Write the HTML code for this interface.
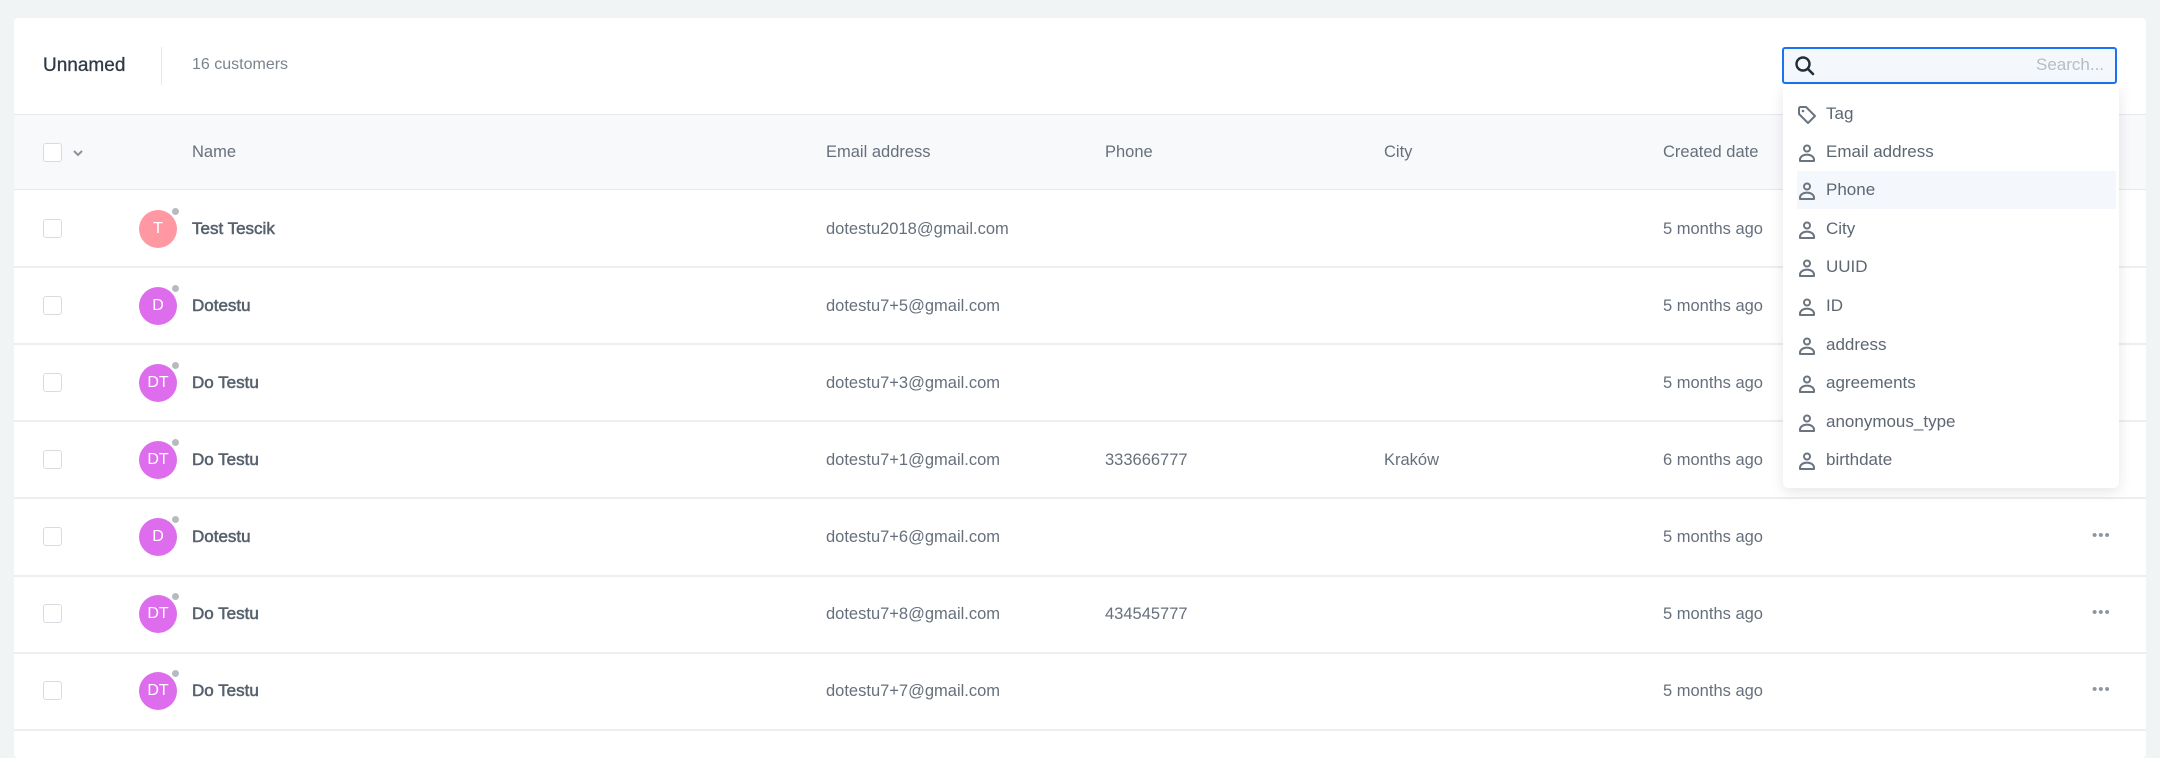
<!DOCTYPE html>
<html><head><meta charset="utf-8"><style>
*{margin:0;padding:0;box-sizing:border-box}
body{width:2160px;height:740px;background:#f1f4f5;font-family:"Liberation Sans",sans-serif;position:relative;overflow:hidden;color:#5b6673}
.card{position:absolute;left:14px;top:18px;width:2132px;height:740px;background:#fff;border-radius:4px}
.a{position:absolute;white-space:nowrap}
.hdr{position:absolute;left:14px;top:114px;width:2132px;height:76px;background:#f8f9fb;border-top:1px solid #e6e9ec;border-bottom:1px solid #e6e9ec}
.sep{position:absolute;left:14px;width:2132px;height:2px;background:#eceef0}
.cb{position:absolute;left:43px;width:19px;height:19px;border:1px solid #d8dce0;border-radius:3px;background:#fff}
.av{position:absolute;left:139px;width:38px;height:38px;border-radius:50%;color:#fff;font-size:16px;text-align:center;line-height:38px}
.av i{position:absolute;right:-4px;top:-4px;width:11px;height:11px;border-radius:50%;background:#b5bbc1;border:2px solid #fff}
.nm{position:absolute;left:192px;font-size:17px;color:#56616e;-webkit-text-stroke:0.55px #56616e}
.t{position:absolute;font-size:16.5px;color:#66707c}
.dots{position:absolute;left:2092px;font-size:15px;letter-spacing:1px;color:#8e969f}
.dd{position:absolute;left:1783px;top:85px;width:336px;height:403px;background:#fff;border-radius:0 0 5px 5px;box-shadow:0 4px 14px rgba(0,0,0,.1)}
.it{position:absolute;left:0;width:336px;height:38px;font-size:17px;color:#5d6773}
.it span{position:absolute;left:43px;top:9px}
.it svg{position:absolute;left:14px;top:10px}
</style></head><body>
<div class="card"></div>
<div class="a" style="left:43px;top:55px;font-size:19px;color:#2f3a45;-webkit-text-stroke:0.3px #2f3a45">Unnamed</div>
<div class="a" style="left:161px;top:47px;width:1px;height:38px;background:#e6e9ec"></div>
<div class="a" style="left:192px;top:56px;font-size:16px;color:#7a838d">16 customers</div>
<div class="a" style="left:1782px;top:47px;width:335px;height:37px;border:2px solid #1a73f0;border-radius:3px;background:#f4f8fd"></div>
<svg class="a" style="left:1794px;top:55px" width="22" height="22" viewBox="0 0 22 22"><circle cx="9" cy="9" r="6.5" fill="none" stroke="#222d38" stroke-width="2.4"/><path d="M14 14l5 5" stroke="#222d38" stroke-width="2.6" stroke-linecap="round"/></svg>
<div class="a" style="left:2036px;top:55px;font-size:17px;color:#b5bcc4">Search...</div>
<div class="hdr"></div>
<div class="cb" style="top:143px"></div>
<svg class="a" style="left:72px;top:148px" width="12" height="10"><path d="M2 3l4 4 4-4" fill="none" stroke="#8a929b" stroke-width="2"/></svg>
<div class="t" style="left:192px;top:143px">Name</div>
<div class="t" style="left:826px;top:143px">Email address</div>
<div class="t" style="left:1105px;top:143px">Phone</div>
<div class="t" style="left:1384px;top:143px">City</div>
<div class="t" style="left:1663px;top:143px">Created date</div>

<div class="sep" style="top:266px"></div><div class="sep" style="top:343px"></div><div class="sep" style="top:420px"></div><div class="sep" style="top:497px"></div><div class="sep" style="top:575px"></div><div class="sep" style="top:652px"></div><div class="sep" style="top:729px"></div>

<div class="cb" style="top:219px"></div><div class="av" style="top:210px;background:#ff98a2">T<i></i></div><div class="nm" style="top:219px">Test Tescik</div><div class="t" style="left:826px;top:220px">dotestu2018@gmail.com</div><div class="t" style="left:1663px;top:220px">5 months ago</div>
<div class="cb" style="top:296px"></div><div class="av" style="top:287px;background:#dd6ded">D<i></i></div><div class="nm" style="top:296px">Dotestu</div><div class="t" style="left:826px;top:297px">dotestu7+5@gmail.com</div><div class="t" style="left:1663px;top:297px">5 months ago</div>
<div class="cb" style="top:373px"></div><div class="av" style="top:364px;background:#dd6ded">DT<i></i></div><div class="nm" style="top:373px">Do Testu</div><div class="t" style="left:826px;top:374px">dotestu7+3@gmail.com</div><div class="t" style="left:1663px;top:374px">5 months ago</div>
<div class="cb" style="top:450px"></div><div class="av" style="top:441px;background:#dd6ded">DT<i></i></div><div class="nm" style="top:450px">Do Testu</div><div class="t" style="left:826px;top:451px">dotestu7+1@gmail.com</div><div class="t" style="left:1105px;top:451px">333666777</div><div class="t" style="left:1384px;top:451px">Kraków</div><div class="t" style="left:1663px;top:451px">6 months ago</div>
<div class="cb" style="top:527px"></div><div class="av" style="top:518px;background:#dd6ded">D<i></i></div><div class="nm" style="top:527px">Dotestu</div><div class="t" style="left:826px;top:528px">dotestu7+6@gmail.com</div><div class="t" style="left:1663px;top:528px">5 months ago</div><div class="dots" style="top:527px">•••</div>
<div class="cb" style="top:604px"></div><div class="av" style="top:595px;background:#dd6ded">DT<i></i></div><div class="nm" style="top:604px">Do Testu</div><div class="t" style="left:826px;top:605px">dotestu7+8@gmail.com</div><div class="t" style="left:1105px;top:605px">434545777</div><div class="t" style="left:1663px;top:605px">5 months ago</div><div class="dots" style="top:604px">•••</div>
<div class="cb" style="top:681px"></div><div class="av" style="top:672px;background:#dd6ded">DT<i></i></div><div class="nm" style="top:681px">Do Testu</div><div class="t" style="left:826px;top:682px">dotestu7+7@gmail.com</div><div class="t" style="left:1663px;top:682px">5 months ago</div><div class="dots" style="top:681px">•••</div>

<div class="dd">
<div class="it" style="top:10px"><svg width="20" height="20" viewBox="0 0 20 20"><path d="M2 3v6l9 9 7-7-9-9H3z" fill="none" stroke="#6b7580" stroke-width="2" stroke-linejoin="round"/><circle cx="6" cy="6" r="1.3" fill="#6b7580"/></svg><span>Tag</span></div>
<div class="it" style="top:48px"><svg width="20" height="20" viewBox="0 0 20 20"><circle cx="10" cy="5.5" r="3" fill="none" stroke="#6b7580" stroke-width="2"/><path d="M3 18v-1.5a5 3.5 0 0114 0V18z" fill="none" stroke="#6b7580" stroke-width="2" stroke-linejoin="round"/></svg><span>Email address</span></div>
<div class="it" style="top:86px;left:14px;width:319px;background:#f4f8fd"><svg width="20" height="20" viewBox="0 0 20 20" style="left:0"><circle cx="10" cy="5.5" r="3" fill="none" stroke="#6b7580" stroke-width="2"/><path d="M3 18v-1.5a5 3.5 0 0114 0V18z" fill="none" stroke="#6b7580" stroke-width="2" stroke-linejoin="round"/></svg><span style="left:29px">Phone</span></div>
<div class="it" style="top:125px"><svg width="20" height="20" viewBox="0 0 20 20"><circle cx="10" cy="5.5" r="3" fill="none" stroke="#6b7580" stroke-width="2"/><path d="M3 18v-1.5a5 3.5 0 0114 0V18z" fill="none" stroke="#6b7580" stroke-width="2" stroke-linejoin="round"/></svg><span>City</span></div>
<div class="it" style="top:163px"><svg width="20" height="20" viewBox="0 0 20 20"><circle cx="10" cy="5.5" r="3" fill="none" stroke="#6b7580" stroke-width="2"/><path d="M3 18v-1.5a5 3.5 0 0114 0V18z" fill="none" stroke="#6b7580" stroke-width="2" stroke-linejoin="round"/></svg><span>UUID</span></div>
<div class="it" style="top:202px"><svg width="20" height="20" viewBox="0 0 20 20"><circle cx="10" cy="5.5" r="3" fill="none" stroke="#6b7580" stroke-width="2"/><path d="M3 18v-1.5a5 3.5 0 0114 0V18z" fill="none" stroke="#6b7580" stroke-width="2" stroke-linejoin="round"/></svg><span>ID</span></div>
<div class="it" style="top:241px"><svg width="20" height="20" viewBox="0 0 20 20"><circle cx="10" cy="5.5" r="3" fill="none" stroke="#6b7580" stroke-width="2"/><path d="M3 18v-1.5a5 3.5 0 0114 0V18z" fill="none" stroke="#6b7580" stroke-width="2" stroke-linejoin="round"/></svg><span>address</span></div>
<div class="it" style="top:279px"><svg width="20" height="20" viewBox="0 0 20 20"><circle cx="10" cy="5.5" r="3" fill="none" stroke="#6b7580" stroke-width="2"/><path d="M3 18v-1.5a5 3.5 0 0114 0V18z" fill="none" stroke="#6b7580" stroke-width="2" stroke-linejoin="round"/></svg><span>agreements</span></div>
<div class="it" style="top:318px"><svg width="20" height="20" viewBox="0 0 20 20"><circle cx="10" cy="5.5" r="3" fill="none" stroke="#6b7580" stroke-width="2"/><path d="M3 18v-1.5a5 3.5 0 0114 0V18z" fill="none" stroke="#6b7580" stroke-width="2" stroke-linejoin="round"/></svg><span>anonymous_type</span></div>
<div class="it" style="top:356px"><svg width="20" height="20" viewBox="0 0 20 20"><circle cx="10" cy="5.5" r="3" fill="none" stroke="#6b7580" stroke-width="2"/><path d="M3 18v-1.5a5 3.5 0 0114 0V18z" fill="none" stroke="#6b7580" stroke-width="2" stroke-linejoin="round"/></svg><span>birthdate</span></div>
</div>
</body></html>
